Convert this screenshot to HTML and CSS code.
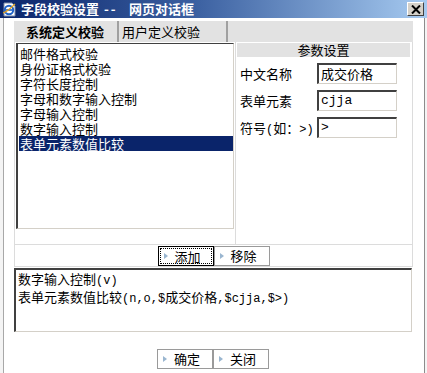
FILE: index.html
```html
<!DOCTYPE html>
<html lang="zh-CN">
<head>
    <meta charset="UTF-8">
    <title>字段校验设置 -- 网页对话框</title>
    <link rel="stylesheet" href="styles.css">
</head>
<body>

<div class="dialog">
    <div class="titlebar">
        <svg class="app-icon" width="15" height="15" viewBox="0 0 15 15">
            <path d="M2 1h8l3 3v10H2z" fill="#fff" stroke="#7a8aa8"/>
            <circle cx="7" cy="8" r="4.2" fill="none" stroke="#1f62c8" stroke-width="2"/>
            <path d="M3.5 8h7" stroke="#1f62c8" stroke-width="1.6"/>
            <path d="M1 11c3-1 8-5 12-9" stroke="#e2a020" stroke-width="1.2" fill="none"/>
        </svg>
        <span class="title">字段校验设置<span class="sep">--</span>网页对话框</span>
        <span class="close-btn">
            <svg width="10" height="9" viewBox="0 0 10 9">
                <path d="M1 0.5l8 8M9 0.5l-8 8" stroke="#000" stroke-width="2"/>
            </svg>
        </span>
    </div>

    <div class="frame">
        <div class="tabs">
            <div class="tab active">系统定义校验</div>
            <div class="tab">用户定义校验</div>
        </div>

        <div class="panel">
            <div class="left-cell">
                <ul class="listbox">
                    <li>邮件格式校验</li>
                    <li>身份证格式校验</li>
                    <li>字符长度控制</li>
                    <li>字母和数字输入控制</li>
                    <li>字母输入控制</li>
                    <li>数字输入控制</li>
                    <li class="selected">表单元素数值比较</li>
                </ul>
            </div>
            <div class="right-cell">
                <div class="param-head">参数设置</div>
                <div class="param-row">
                    <label>中文名称</label>
                    <span class="field">成交价格</span>
                </div>
                <div class="param-row">
                    <label>表单元素</label>
                    <span class="field mono">cjja</span>
                </div>
                <div class="param-row">
                    <label>符号<span class="asc">(</span>如：<span class="asc">&gt;)</span></label>
                    <span class="field mono">&gt;</span>
                </div>
            </div>
            <div class="button-row">
                <span class="btn focused"><span class="focus-ring">添加</span></span>
                <span class="btn">移除</span>
            </div>
        </div>

        <div class="result">
            <div>数字输入控制<span class="asc">(v)</span></div>
            <div>表单元素数值比较<span class="asc">(n,o,$</span>成交价格<span class="asc">,$cjja,$&gt;)</span></div>
        </div>

        <div class="footer">
            <span class="btn">确定</span>
            <span class="btn">关闭</span>
        </div>
    </div>
</div>

</body>
</html>
```

FILE: styles.css
```css
* {
    box-sizing: border-box;
}

body {
    margin: 0;
    background-color: #fff;
    font-family: "Noto Sans CJK SC", "DejaVu Sans", sans-serif;
    font-size: 13px;
    color: #000;
}

.dialog {
    width: 427px;
    height: 373px;
    background-color: #f4f4f4;
    display: flex;
    flex-direction: column;
}

.titlebar {
    height: 18px;
    display: flex;
    align-items: center;
    background: linear-gradient(to right, #0a246a, #3a5fa0 45%, #a6caf0);
    color: #fff;
    padding: 0 3px 0 2px;
}

.app-icon {
    flex: none;
    margin-right: 4px;
}

.title {
    font-weight: bold;
    font-size: 13px;
    line-height: 18px;
    flex: 1;
    white-space: nowrap;
}

.title .sep {
    display: inline-block;
    width: 13px;
    margin: 0 12px 0 5px;
    letter-spacing: 2px;
}

.close-btn {
    width: 17px;
    height: 14px;
    background-color: #d4d0c8;
    border: 1px solid;
    border-color: #fff #404040 #404040 #fff;
    display: flex;
    align-items: center;
    justify-content: center;
}

.frame {
    flex: 1;
    margin: 0 2px 0 3px;
    border-left: 1px solid #a8a8a8;
    border-right: 1px solid #8c8c8c;
    background-color: #fff;
    padding: 3px 11px 0 10px;
}

.tabs {
    height: 21px;
    display: flex;
    background-color: #e2e2e2;
}

.tab {
    width: 106px;
    line-height: 21px;
    padding-left: 12px;
    border-right: 2px solid #a0a0a0;
}

.tab.active {
    width: 105px;
    font-weight: bold;
}

.tab + .tab {
    width: 109px;
    padding-left: 3px;
}

.panel {
    display: grid;
    grid-template-columns: 222px 177px;
    grid-template-rows: 203px 22px;
}

.left-cell {
    border: 1px solid #dcdcdc;
    border-top: none;
    padding: 1px;
}

.listbox {
    list-style: none;
    margin: 0;
    height: 186px;
    padding: 2px 0 0 1px;
    border: 1px solid;
    border-color: #404040 #d4d0c8 #d4d0c8 #404040;
    border-width: 1px 1px 1px 2px;
    background-color: #fff;
}

.listbox li {
    height: 15px;
    line-height: 15px;
    padding-left: 1px;
}

.listbox .selected {
    background-color: #0a246a;
    color: #fff;
}

.right-cell {
    border-right: 1px solid #dcdcdc;
    border-bottom: 1px solid #dcdcdc;
    padding: 1px 2px 0 1px;
}

.param-head {
    background-color: #e2e2e2;
    text-align: center;
    height: 14px;
    line-height: 14px;
    margin-bottom: 6px;
}

.param-row {
    display: flex;
    align-items: center;
    height: 20px;
    margin-bottom: 7px;
    padding-left: 3px;
}

.param-row label {
    width: 77px;
    white-space: nowrap;
}

.field {
    width: 80px;
    height: 21px;
    line-height: 17px;
    padding-left: 2px;
    border: 2px solid;
    border-color: #404040 #d4d0c8 #d4d0c8 #404040;
    border-width: 2px 1px 1px 2px;
    background-color: #fff;
}

.mono {
    font-family: "Liberation Mono", "DejaVu Sans Mono", monospace;
    font-size: 13px;
}

.asc {
    font-family: "Liberation Mono", "DejaVu Sans Mono", monospace;
    font-size: 12px;
}

.button-row {
    grid-column: 1 / span 2;
    border: 1px solid #dcdcdc;
    border-top: none;
    display: flex;
    justify-content: center;
    align-items: center;
}

.btn {
    position: relative;
    width: 56px;
    height: 20px;
    line-height: 18px;
    border: 1px solid #9a9a9a;
    background-color: #fff;
    padding-left: 16px;
}

.btn::before {
    content: "";
    position: absolute;
    left: 5px;
    top: 6px;
    border-left: 4px solid #9ab6d0;
    border-top: 3px solid transparent;
    border-bottom: 3px solid transparent;
}

.btn.focused {
    border: 1px solid #000;
    padding: 1px;
}

.focus-ring {
    display: block;
    height: 16px;
    line-height: 15px;
    border: 1px dotted #000;
    padding-left: 14px;
}

.result {
    height: 64px;
    margin-top: 1px;
    width: 398px;
    padding: 1px 0 0 2px;
    line-height: 15px;
    border: 1px solid;
    border-color: #404040 #d4d0c8 #d4d0c8 #404040;
    border-width: 2px 1px 1px 2px;
    background-color: #fff;
}

.footer {
    display: flex;
    justify-content: center;
    margin-top: 17px;
    padding-right: 1px;
}
```
